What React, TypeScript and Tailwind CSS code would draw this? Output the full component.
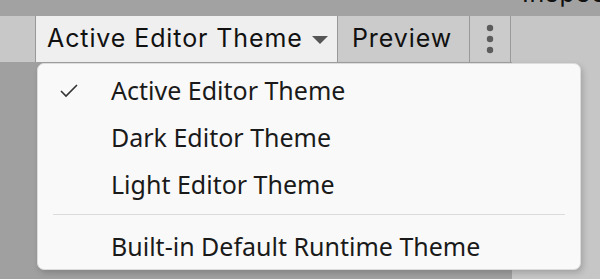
import React from "react";

const menuFont = { fontFamily: '"Noto Sans", "Open Sans", sans-serif' };

export default function App() {
  return (
    <div className="relative w-[600px] h-[279px] overflow-hidden flex bg-[#a0a0a0]" style={{ fontFamily: 'Inter, "Liberation Sans", sans-serif' }}>
      <div className="w-[512px] flex flex-col">
        <div className="h-[16px] bg-[#a2a2a2]" />
        <div className="h-[46px] flex bg-[#c8c8c8] text-[25px] tracking-[0.9px] text-[#111]">
          <div className="w-[36px] border-r border-[#999]" />
          <div className="w-[302px] bg-[#efefef] flex items-center pl-[11px] border-r border-[#999]">
            <span>Active Editor Theme</span>
            <svg width="16" height="10" viewBox="0 0 16 10" className="ml-[9px] mt-[2px]">
              <path d="M0 1 H16 L8 9 Z" fill="#555" />
            </svg>
          </div>
          <div className="w-[132px] bg-[#cbcbcb] flex items-center pl-[14px] border-r border-[#999]">Preview</div>
          <div className="w-[41px] bg-[#cbcbcb] flex items-center justify-center border-r border-[#999]">
            <svg width="8" height="30" viewBox="0 0 8 30">
              <circle cx="4" cy="4" r="3.2" fill="#5c5c5c" />
              <circle cx="4" cy="15" r="3.2" fill="#5c5c5c" />
              <circle cx="4" cy="26" r="3.2" fill="#5c5c5c" />
            </svg>
          </div>
        </div>
        <div className="flex-1 bg-[#a0a0a0]" />
      </div>
      <div className="flex-1 flex flex-col">
        <div className="h-[16px] bg-[#a2a2a2] overflow-hidden relative">
          <span className="absolute left-[10px] top-[-22px] text-[25px] tracking-[0.9px] text-[#111] leading-[30px]">Inspector</span>
        </div>
        <div className="flex-1 bg-[#c6c6c6]" />
      </div>

      <div
        className="absolute left-[37px] top-[63px] w-[544px] h-[207px] bg-[#f9f9f9] rounded-[7px] border border-[#dcdcdc] shadow-[2px_3px_6px_rgba(0,0,0,0.18)] pt-[3px] text-[#1a1a1a] text-[25px]"
        style={menuFont}
      >
        {[
          { label: "Active Editor Theme", checked: true },
          { label: "Dark Editor Theme" },
          { label: "Light Editor Theme" },
        ].map((it) => (
          <div key={it.label} className="h-[47px] flex items-center">
            <div className="w-[73px] flex justify-start pl-[22px]">
              {it.checked && (
                <svg width="18" height="14" viewBox="0 0 18 14">
                  <path d="M1 7 L6 12 L17 1" fill="none" stroke="#333" strokeWidth="1.6" />
                </svg>
              )}
            </div>
            <span>{it.label}</span>
          </div>
        ))}
        <div className="h-[15px] pt-[6px] px-[15px]">
          <div className="h-px bg-[#dcdcdc]" />
        </div>
        <div className="h-[47px] flex items-center">
          <div className="w-[73px]" />
          <span>Built-in Default Runtime Theme</span>
        </div>
      </div>
    </div>
  );
}
